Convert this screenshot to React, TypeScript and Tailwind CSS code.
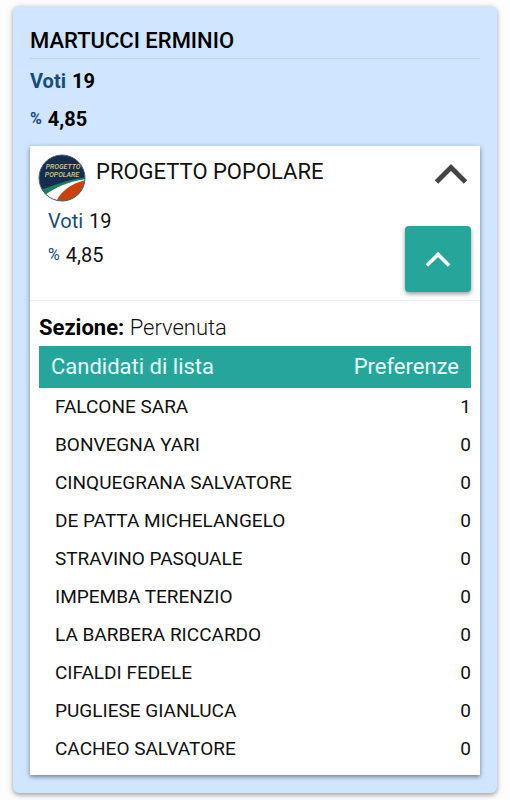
import { useState } from 'react'
import clsx from 'clsx'

const candidates = [
  { name: 'FALCONE SARA', votes: 1 },
  { name: 'BONVEGNA YARI', votes: 0 },
  { name: 'CINQUEGRANA SALVATORE', votes: 0 },
  { name: 'DE PATTA MICHELANGELO', votes: 0 },
  { name: 'STRAVINO PASQUALE', votes: 0 },
  { name: 'IMPEMBA TERENZIO', votes: 0 },
  { name: 'LA BARBERA RICCARDO', votes: 0 },
  { name: 'CIFALDI FEDELE', votes: 0 },
  { name: 'PUGLIESE GIANLUCA', votes: 0 },
  { name: 'CACHEO SALVATORE', votes: 0 },
]

function PartyLogo() {
  return (
    <svg viewBox="0 0 48 48" className="size-12 shrink-0" role="img" aria-label="Progetto Popolare">
      <defs>
        <clipPath id="disc">
          <circle cx="24" cy="24" r="23" />
        </clipPath>
      </defs>
      <g clipPath="url(#disc)">
        <rect width="48" height="48" fill="#162d50" />
        <path d="M3 36C15 31 30 26 48 23V48H3Z" fill="#16835f" />
        <path d="M7 41C17 33 32 27 48 25V48H7Z" fill="#fff" />
        <path d="M18 48C22 38 33 29 48 26V48Z" fill="#c8420d" />
      </g>
      <circle cx="24" cy="24" r="23" fill="none" stroke="#49627a" />
      <g
        fill="#d3c58a"
        fontFamily="Roboto, sans-serif"
        fontSize="7"
        fontStyle="italic"
        fontWeight="500"
        textAnchor="middle"
      >
        <text x="25" y="15">PROGETTO</text>
        <text x="24" y="23">POPOLARE</text>
      </g>
    </svg>
  )
}

function Chevron({ open, className }: { open: boolean; className: string }) {
  return (
    <svg
      viewBox="0 0 34 22"
      className={clsx(className, !open && 'rotate-180')}
      fill="none"
      stroke="currentColor"
      strokeWidth="4.8"
      aria-hidden="true"
    >
      <path d="M2.5 19L17 4.5L31.5 19" />
    </svg>
  )
}

function Stat({ label, value }: { label: string; value: string }) {
  return (
    <p className="flex gap-1.5">
      <span className={clsx('text-[#164b83]', label === '%' && 'text-base leading-[inherit]')}>
        {label}
      </span>
      <span>{value}</span>
    </p>
  )
}

export default function App() {
  const [open, setOpen] = useState(true)
  const [showList, setShowList] = useState(true)

  return (
    <main className="bg-[#fdfdfd] px-[13px] pt-1.5 pb-[7px] font-['Roboto','Liberation_Sans',sans-serif] text-xl text-[#111]">
      <article className="rounded-md bg-[#d0e5ff] px-[17px] pt-[18px] pb-[18px] shadow-[0_2px_4px_rgba(0,0,0,0.3),0_1px_8px_rgba(0,0,0,0.12)]">
        <h1 className="border-b border-[#c8d0da] text-[22px] leading-[34px] font-medium text-black">
          MARTUCCI ERMINIO
        </h1>
        <div className="pt-[3px] pb-2 leading-[38px] font-bold text-black">
          <Stat label="Voti" value="19" />
          <Stat label="%" value="4,85" />
        </div>

        <section className="bg-white shadow-[0_2px_4px_rgba(0,0,0,0.35),0_1px_6px_rgba(0,0,0,0.15)]">
          {/* Party */}
          <header className="border-b border-[#ededed] p-2">
            <div className="flex gap-2.5">
              <PartyLogo />
              <h2 className="flex-1 text-[22px] leading-9 font-normal">PROGETTO POPOLARE</h2>
              <button
                type="button"
                onClick={() => setOpen(!open)}
                aria-label="Mostra o nascondi la lista"
                aria-expanded={open}
                className="flex h-10 items-center pr-1 text-[#444]"
              >
                <Chevron open={open} className="w-[34px]" />
              </button>
            </div>
            <div className="flex items-end justify-between pl-2.5">
              <div className="self-start pt-0.5 leading-[34px]">
                <Stat label="Voti" value="19" />
                <Stat label="%" value="4,85" />
              </div>
              <button
                type="button"
                onClick={() => setShowList(!showList)}
                aria-label="Mostra o nascondi le preferenze"
                aria-expanded={showList}
                className="mt-6 mr-px flex size-[66px] items-center justify-center rounded bg-[#26a69a] text-white shadow-[0_2px_4px_rgba(0,0,0,0.4)]"
              >
                <Chevron open={showList} className="w-[26px]" />
              </button>
            </div>
          </header>

          {/* Preferences */}
          {open && (
            <div className="px-[9px] pt-2 pb-[7px]">
              <p className="text-[22px] leading-[37px] font-light">
                <strong className="font-bold text-black">Sezione:</strong> Pervenuta
              </p>
              {showList && (
                <table className="w-full">
                  <thead>
                    <tr className="bg-[#26a69a] text-[22px] leading-[42px] text-[#e9fffc]">
                      <th className="p-0 pl-3 text-left font-normal">Candidati di lista</th>
                      <th className="p-0 pr-3 text-right font-normal">Preferenze</th>
                    </tr>
                  </thead>
                  <tbody>
                    {candidates.map((candidate) => (
                      <tr key={candidate.name} className="text-[19px] leading-[38px]">
                        <td className="p-0 pl-4">{candidate.name}</td>
                        <td className="p-0 text-right">{candidate.votes}</td>
                      </tr>
                    ))}
                  </tbody>
                </table>
              )}
            </div>
          )}
        </section>
      </article>
    </main>
  )
}
